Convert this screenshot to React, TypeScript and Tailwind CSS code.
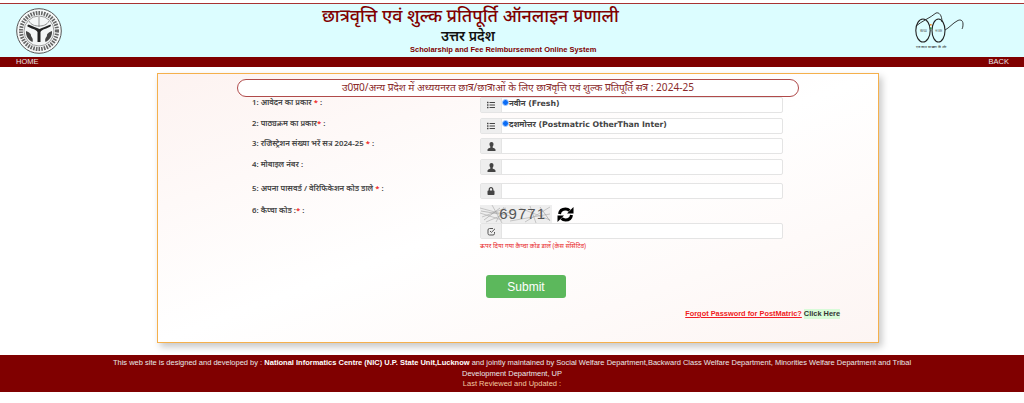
import React from 'react';
import { FaList, FaLock } from 'react-icons/fa';

const Emblem = () => (
  <svg width="46" height="46" viewBox="0 0 46 46">
    <circle cx="23" cy="23" r="22.3" fill="#f6f8f8" stroke="#555" strokeWidth="1" />
    <circle cx="23" cy="23" r="18" fill="none" stroke="#666" strokeWidth="4" strokeDasharray="1.6 1.1" />
    <circle cx="23" cy="23" r="15" fill="#f4f6f6" stroke="#777" strokeWidth="0.7" />
    <path d="M23 9v10M13 13c2 4 6 5 10 5s8-1 10-5" fill="none" stroke="#888" strokeWidth="0.9" />
    <path d="M11 18c4 3 9 3 10.500 6v10h3V24c1.500-3 6.500-3 10.500-6l-.5-1.500c-4 2-8 3-11 4.500-3-1.500-7-2.500-11-4.500z" fill="#222" />
    <path d="M10 23c-.5 5 2.500 9 6.500 11 1-3-.5-4.500-1.500-6 .5-2-2-4-5-5zM36 23c.5 5-2.500 9-6.500 11-1-3 .5-4.500 1.500-6-.5-2 2-4 5-5z" fill="#444" />
  </svg>
);

const Glasses = () => (
  <div className="flex flex-col items-start w-[50px]">
    <svg width="50" height="32" viewBox="0 0 50 32">
      <ellipse cx="9" cy="18.500" rx="7.200" ry="11.500" fill="none" stroke="#222" strokeWidth="1.100" />
      <ellipse cx="24.500" cy="18.500" rx="6.500" ry="11.500" fill="none" stroke="#222" strokeWidth="1.100" />
      <path d="M2 14C8 9 16 6 22 1c3-1 6 2 6 9" fill="none" stroke="#222" strokeWidth="0.9" />
      <path d="M31 18c4-2 8-7 12-9 3-2 6-1 6 3 0 3-.5 4-1 5" fill="none" stroke="#222" strokeWidth="0.9" />
      <rect x="16" y="12" width="1.600" height="1.700" fill="#f08a24" />
      <rect x="16" y="13.700" width="1.600" height="1.700" fill="#f4f4f4" />
      <rect x="16" y="15.400" width="1.600" height="1.700" fill="#2a8a3a" />
      <text x="9" y="20" fontSize="3.600" textAnchor="middle" fill="#333">स्वच्छ</text>
      <text x="24.500" y="20" fontSize="3.600" textAnchor="middle" fill="#333">भारत</text>
    </svg>
    <span className="ml-[2px] mt-[1px] text-[3.2px] leading-[5px] text-[#222] whitespace-nowrap">एक कदम स्वच्छता की ओर</span>
  </div>
);

const Captcha = () => (
  <div className="relative w-[72px] h-[18px] bg-[#eeeeee] overflow-hidden flex items-center justify-end pr-[6px]">
    <svg className="absolute inset-0" width="72" height="18" viewBox="0 0 72 18">
      <path d="M0 3l30 8M2 12l24-9M6 17L34 5M0 8l22 7M12 0l10 18M24 2l-8 15M30 16l40-7M40 3l30 12M45 17l25-15M50 1l6 17" stroke="#a8a8a8" strokeWidth="0.6" fill="none" />
      <path d="M1 6l18 3M4 15l16-12M60 2l10 14" stroke="#8c8c8c" strokeWidth="0.5" fill="none" />
    </svg>
    <span className="relative text-[15px] tracking-[1px] text-[#555]">69771</span>
  </div>
);

// thick two-arrow refresh, the icon-font one in the picture is heavier than FaSync
const RefreshIcon = () => (
  <svg width="17" height="17" viewBox="0 0 17 17">
    <path d="M2.500 8C3 4.500 5.500 3 8.500 3c1.800 0 3 .6 4 1.600" fill="none" stroke="#000" strokeWidth="3" />
    <path d="M10 7.500h6.500V1z" fill="#000" />
    <path d="M14.500 9c-.5 3.500-3 5-6 5-1.800 0-3-.6-4-1.600" fill="none" stroke="#000" strokeWidth="3" />
    <path d="M7 9.500H.5V16z" fill="#000" />
  </svg>
);

const UserIcon = () => (
  <svg width="9" height="9" viewBox="0 0 9 9">
    <path d="M4.500 0C3 0 2.400 1 2.500 2.400c.1 1 .4 1.800.9 2.300v.7C2.500 6 .6 6.400.5 7.500V9h8V7.500c-.1-1.100-2-1.500-2.900-2.100v-.7c.5-.5.8-1.300.9-2.300C6.600 1 6 0 4.500 0z" fill="#444" />
  </svg>
);

const CheckIcon = () => (
  <svg width="9" height="9" viewBox="0 0 9 9">
    <path d="M7.500 5v1.500A1.500 1.500 0 0 1 6 8H2.500A1.500 1.500 0 0 1 1 6.500V3a1.500 1.500 0 0 1 1.500-1.500H6" fill="none" stroke="#555" strokeWidth="1" />
    <path d="M3 4l1.400 1.400L8 1.800" fill="none" stroke="#555" strokeWidth="1" />
  </svg>
);

const fieldLabel = "font-['Noto_Sans',sans-serif] text-[7.8px] leading-[11px] font-semibold text-[#444]";

const InputRow = ({ icon, children }: { icon: React.ReactNode; children?: React.ReactNode }) => (
  <div className="flex h-[16px] w-[303px] rounded-[2px] border border-[#e4e4e4] bg-white">
    <div className="flex w-[21px] shrink-0 items-center justify-center border-r border-[#e4e4e4] bg-[#eeeeee] text-[#444]">
      {icon}
    </div>
    <div className="flex flex-1 items-start overflow-hidden">{children}</div>
  </div>
);

const Radio = ({ text }: { text: string }) => (
  <div className="flex items-start">
    <span className="mt-[0.5px] h-[7px] w-[7px] rounded-full border border-[#a8ccff] bg-[#0a6cf5]" />
    <span className="font-['DejaVu_Sans','Noto_Sans',sans-serif] text-[7.8px] leading-[12px] font-bold text-[#444] whitespace-nowrap">{text}</span>
  </div>
);

const Req = () => <span className="text-[#e22]">*</span>;

const App = () => {
  return (
    <div className="w-[1024px] h-[403px] overflow-hidden bg-white font-['Liberation_Sans',sans-serif]">
      {/* Header */}
      <div className="mt-[3px] h-[54px] border-t border-[#a83232] bg-[#dcfdff] flex items-center pl-[16px] pr-[60px]">
        <Emblem />
        <div className="ml-[260px] flex flex-col items-start -mt-[1px]">
          <div className="font-['Noto_Sans',sans-serif] text-[17.9px] leading-[20px] font-medium text-[#800000] whitespace-nowrap">
            छात्रवृत्ति एवं शुल्क प्रतिपूर्ति ऑनलाइन प्रणाली
          </div>
          <div className="ml-[119px] font-['Noto_Sans',sans-serif] text-[14px] leading-[17px] mt-[2px] font-semibold text-[#111]">उत्तर प्रदेश</div>
          <div className="ml-[88px] text-[7.5px] leading-[10px] mt-[1px] font-bold text-[#800000] whitespace-nowrap">Scholarship and Fee Reimbursement Online System</div>
        </div>
        <div className="ml-auto">
          <Glasses />
        </div>
      </div>

      {/* Nav */}
      <div className="h-[10px] bg-[#800000] flex items-center justify-between pl-[16px] pr-[15px] text-[7.5px] leading-[10px] text-[#e8e8e8]">
        <span>HOME</span>
        <span>BACK</span>
      </div>

      {/* Card */}
      <div className="mt-[6px] ml-[157px] w-[722px] h-[270px] border border-[#f5b04c] bg-gradient-to-br from-[#fdf3f1] via-white to-[#fdf5f3] shadow-[3px_4px_7px_rgba(0,0,0,0.22)] pt-[5px]">
        <div className="ml-[79px] w-[562px] h-[18px] rounded-[9px] border border-[#b04a4a] bg-white flex items-center justify-center font-['Noto_Sans',sans-serif] text-[10.1px] text-[#8a2a2a] whitespace-nowrap">
          उ0प्र0/अन्य प्रदेश में अध्ययनरत छात्र/छात्राओं के लिए छात्रवृत्ति एवं शुल्क प्रतिपूर्ति सत्र : 2024-25
        </div>

        <div className="ml-[94px] grid grid-cols-[228px_303px] grid-rows-[21px_20px_21px_24px_22px_auto]">
          <div className={fieldLabel}>1: आवेदन का प्रकार <Req /> :</div>
          <InputRow icon={<FaList size={8} />}><Radio text="नवीन (Fresh)" /></InputRow>

          <div className={fieldLabel}>2: पाठ्यक्रम का प्रकार<Req /> :</div>
          <InputRow icon={<FaList size={8} />}><Radio text="दशमोत्तर (Postmatric OtherThan Inter)" /></InputRow>

          <div className={fieldLabel}>3: रजिस्ट्रेशन संख्या भरें सत्र 2024-25 <Req /> :</div>
          <InputRow icon={<UserIcon />} />

          <div className={fieldLabel}>4: मोबाइल नंबर :</div>
          <InputRow icon={<UserIcon />} />

          <div className={fieldLabel}>5: अपना पासवर्ड / वेरिफिकेशन कोड डाले <Req /> :</div>
          <InputRow icon={<FaLock size={8} />} />

          <div className={fieldLabel}>6: कैप्चा कोड :<Req /> :</div>
          <div>
            <div className="flex items-center h-[18px] gap-[5px]">
              <Captcha />
              <RefreshIcon />
            </div>
            <InputRow icon={<CheckIcon />} />
            <div className="mt-[2px] font-['Noto_Sans',sans-serif] text-[6.4px] leading-[9px] text-[#e8262a] whitespace-nowrap">
              ऊपर दिया गया कैप्चा कोड डालें (केस सेंसिटिव)
            </div>
          </div>
        </div>

        <button className="mt-[25px] ml-[328px] block h-[23px] w-[80px] rounded-[3px] bg-[#5cb85c] text-[12px] text-white">
          Submit
        </button>

        <div className="mt-[11px] pr-[38px] flex justify-end items-center gap-[2px] text-[7.4px] leading-[10px] font-bold">
          <a className="text-[#f01c24] underline">Forgot Password for PostMatric?</a>
          <a className="bg-[#d8fbd8] text-[#333]">Click Here</a>
        </div>
      </div>

      {/* Footer */}
      <div className="mt-[12px] h-[37px] bg-[#800000] px-[102px] pt-[3px] text-center text-[7.5px] leading-[10.5px] text-[#e8e8e8]">
        <div>
          This web site is designed and developed by : <b className="text-white">National Informatics Centre (NIC) U.P. State Unit,Lucknow</b> and jointly maintained by Social Welfare Department,Backward Class Welfare Department, Minorities Welfare Department and Tribal Development Department, UP
        </div>
        <div className="text-[#f3c9a0]">Last Reviewed and Updated :</div>
      </div>
    </div>
  );
};

export default App;
